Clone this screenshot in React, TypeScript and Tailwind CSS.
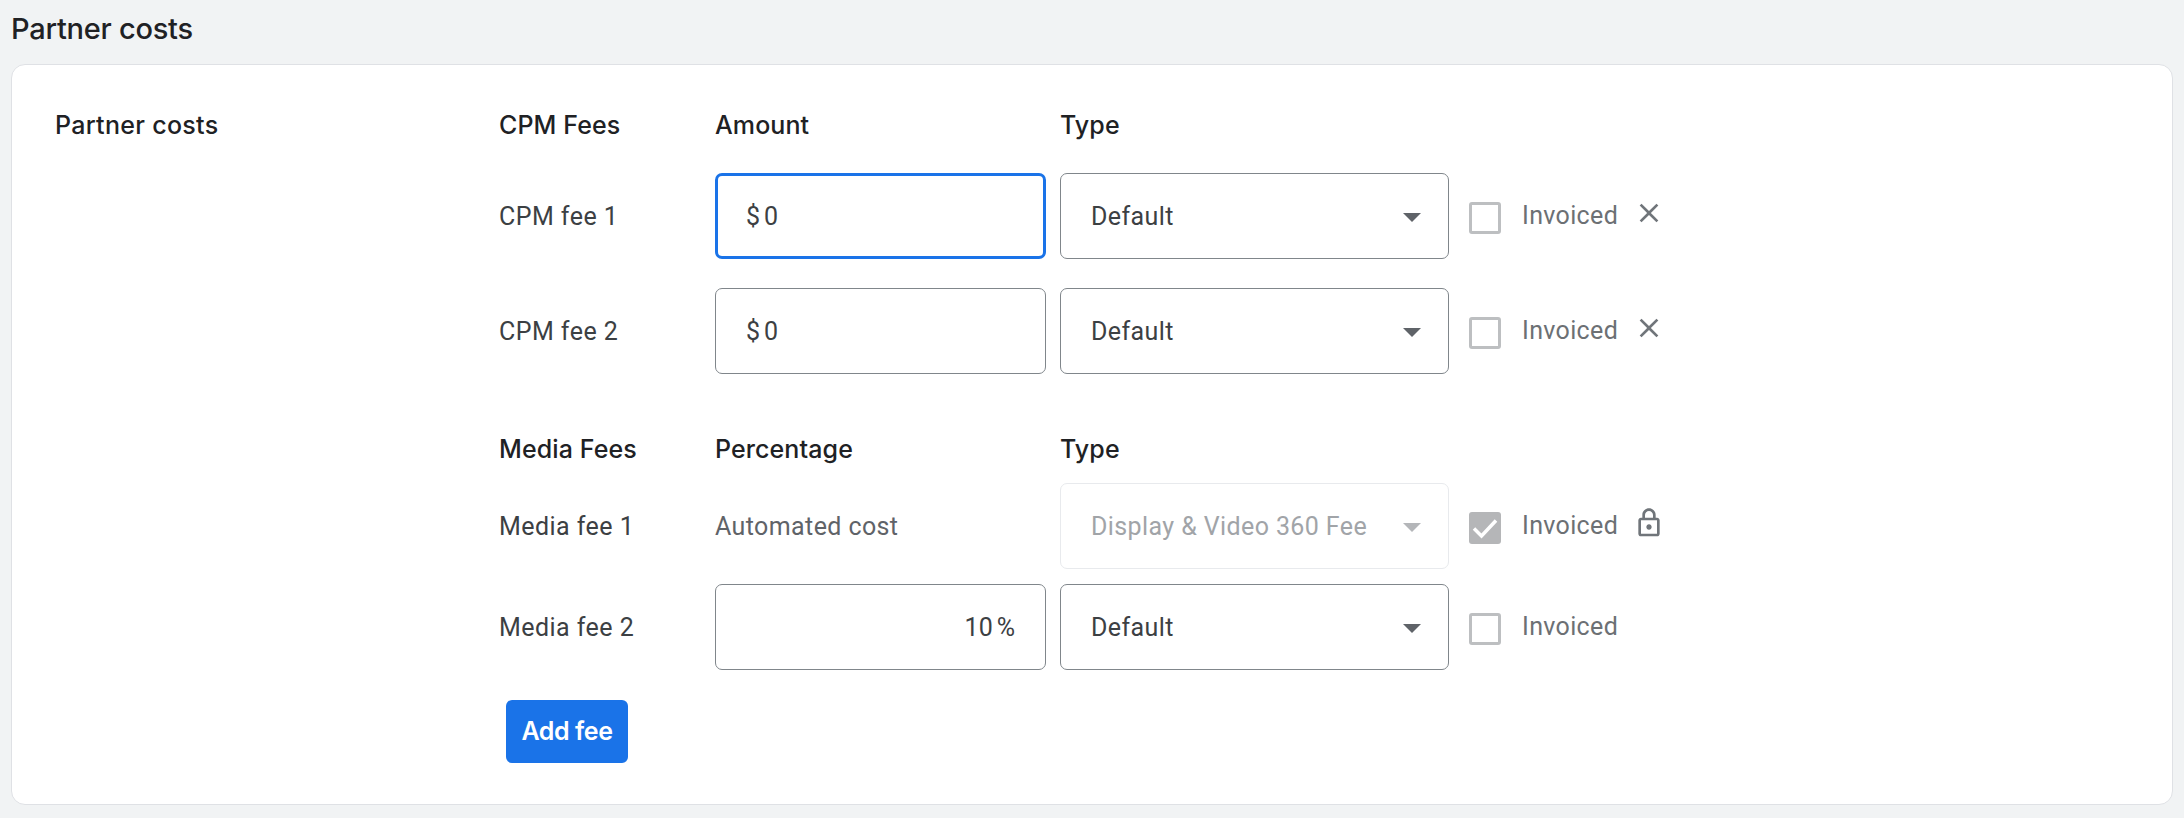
const headingFont = "font-['Inter','Roboto',sans-serif]";
const bodyFont = "font-['Roboto','Liberation_Sans',sans-serif]";

const CLOSE_PATH =
  "M19 6.41L17.59 5 12 10.59 6.41 5 5 6.41 10.59 12 5 17.59 6.41 19 12 13.41 17.59 19 19 17.59 13.41 12z";
const LOCK_PATH =
  "M18 8h-1V6c0-2.76-2.24-5-5-5S7 3.24 7 6v2H6c-1.1 0-2 .9-2 2v10c0 1.1.9 2 2 2h12c1.1 0 2-.9 2-2V10c0-1.1-.9-2-2-2zM9 6c0-1.66 1.34-3 3-3s3 1.34 3 3v2H9V6zm9 14H6V10h12v10zm-6-3c1.1 0 2-.9 2-2s-.9-2-2-2-2 .9-2 2 .9 2 2 2z";

function Icon({ path }: { path: string }) {
  return (
    <svg viewBox="0 0 24 24" className="-mt-[6px] ml-[15px] h-8 w-8 shrink-0 fill-[#70757a]">
      <path d={path} />
    </svg>
  );
}

function HeaderRow({ labels, className }: { labels: string[]; className: string }) {
  return (
    <div className={`flex h-[50px] items-center pt-[2px] text-[25px] font-medium text-[#202124] ${headingFont} ${className}`}>
      <div className="w-[216px] tracking-[0.1px]">{labels[0]}</div>
      <div className="w-[345px] tracking-[0.1px]">{labels[1]}</div>
      <div className="tracking-[0.1px]">{labels[2]}</div>
    </div>
  );
}

function AmountField({ focused }: { focused?: boolean }) {
  return (
    <div
      className={`flex h-[86px] w-[331px] items-center rounded-[7px] bg-white px-[30px] pt-[2px] text-[25px] text-[#3c4043] ${
        focused ? "border-[3px] border-[#1a73e8] pl-[28px]" : "border border-[#80868b]"
      }`}
    >
      $<span className="ml-[4px]">0</span>
    </div>
  );
}

function TypeSelect({ label, disabled }: { label: string; disabled?: boolean }) {
  return (
    <div
      className={`ml-[14px] flex h-[86px] w-[389px] items-center justify-between rounded-[7px] border pl-[30px] pr-[27px] text-[25px] ${
        disabled ? "border-[#e8eaed] text-[#a1a4a8]" : "border-[#80868b] text-[#3c4043]"
      }`}
    >
      <span className="mt-[2px] tracking-[0.4px]">{label}</span>
      <span
        className={`mt-[2px] h-0 w-0 border-x-[9px] border-t-[9px] border-x-transparent ${
          disabled ? "border-t-[#b4b6b9]" : "border-t-[#5f6368]"
        }`}
      />
    </div>
  );
}

function Invoiced({ checked }: { checked?: boolean }) {
  return (
    <>
      <div
        className={`mt-[4px] ml-[20px] h-8 w-8 shrink-0 rounded-[3px] ${
          checked ? "bg-[#b5b6b8]" : "border-[3px] border-[#bdbfc1] bg-white"
        }`}
      >
        {checked && (
          <svg viewBox="0 0 32 32" className="h-8 w-8 fill-none stroke-white stroke-[3.5]">
            <path d="M5 16.5l7.5 7.5L27 8.5" />
          </svg>
        )}
      </div>
      <span className="ml-[21px] text-[25px] tracking-[0.35px] text-[#6c7074]">Invoiced</span>
    </>
  );
}

function FeeRow({
  label,
  className,
  children,
}: {
  label: string;
  className?: string;
  children: React.ReactNode;
}) {
  return (
    <div className={`flex items-center ${className ?? ""}`}>
      <div className="mt-[2px] w-[216px] text-[25px] tracking-[0.45px] text-[#3c4043]">{label}</div>
      {children}
    </div>
  );
}

export default function App() {
  return (
    <div className={`min-h-[818px] bg-[#f1f3f4] px-[11px] pb-[13px] ${bodyFont}`}>
      <h1 className={`flex h-[64px] items-center pb-[7px] text-[29px] font-medium tracking-[-0.25px] text-[#202124] ${headingFont}`}>
        Partner costs
      </h1>
      <div className="flex h-[741px] rounded-[14px] border border-[#dfe1e5] bg-white pl-[43px] pt-[35px]">
        <div className={`flex h-[50px] w-[444px] items-center pt-[2px] text-[25px] font-medium tracking-[0.3px] text-[#202124] ${headingFont}`}>
          Partner costs
        </div>
        <div>
          <HeaderRow labels={["CPM Fees", "Amount", "Type"]} className="mb-[23px]" />
          <FeeRow label="CPM fee 1" className="mb-[29px]">
            <AmountField focused />
            <TypeSelect label="Default" />
            <Invoiced />
            <Icon path={CLOSE_PATH} />
          </FeeRow>
          <FeeRow label="CPM fee 2">
            <AmountField />
            <TypeSelect label="Default" />
            <Invoiced />
            <Icon path={CLOSE_PATH} />
          </FeeRow>
          <HeaderRow labels={["Media Fees", "Percentage", "Type"]} className="mt-[50px] mb-[9px]" />
          <FeeRow label="Media fee 1" className="mb-[15px]">
            <div className="mt-[2px] w-[331px] text-[25px] tracking-[0.4px] text-[#5f6368]">Automated cost</div>
            <TypeSelect label="Display & Video 360 Fee" disabled />
            <Invoiced checked />
            <Icon path={LOCK_PATH} />
          </FeeRow>
          <FeeRow label="Media fee 2">
            <div className="flex h-[86px] w-[331px] items-center justify-end rounded-[7px] border border-[#80868b] px-[30px] pt-[2px] text-[25px] text-[#3c4043]">
              10<span className="ml-[4px]">%</span>
            </div>
            <TypeSelect label="Default" />
            <Invoiced />
          </FeeRow>
          <button
            className={`mt-[30px] ml-[7px] h-[63px] w-[122px] rounded-[6px] bg-[#1a73e8] text-[25px] font-semibold tracking-[-0.4px] text-white ${headingFont}`}
          >
            Add fee
          </button>
        </div>
      </div>
    </div>
  );
}
